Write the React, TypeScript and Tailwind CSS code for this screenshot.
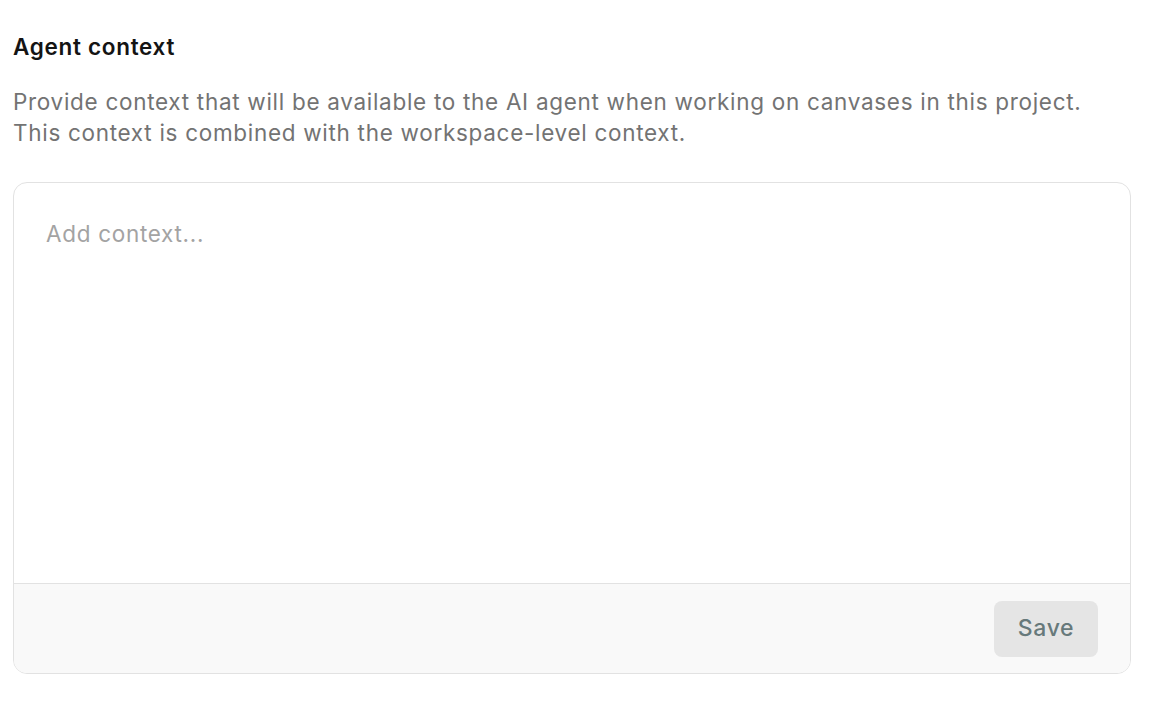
export default function App() {
  return (
    <div className="min-h-screen bg-white px-[13px] pt-[31px] tracking-[0.7px]" style={{ fontFamily: 'Inter, "Noto Sans", sans-serif' }}>
      <h2 className="text-[22.5px] leading-[31px] font-semibold text-[#141414]">Agent context</h2>
      <p className="mt-[24px] text-[22.5px] leading-[31px] text-[#737373]">
        Provide context that will be available to the AI agent when working on canvases in this project.
        <br />
        This context is combined with the workspace-level context.
      </p>
      <div className="mt-[34px] w-[1118px] overflow-hidden rounded-[14px] border-[1.5px] border-[#e2e2e2] bg-white">
        <textarea
          className="block h-[400px] w-full resize-none px-[32px] pt-[35px] text-[22.5px] leading-[31px] tracking-[0.7px] text-[#141414] outline-none placeholder:text-[#a3a3a3]"
          placeholder="Add context..."
        />
        <div className="flex h-[90px] items-center justify-end border-t-[1.5px] border-[#e2e2e2] bg-[#f9f9f9] pr-[32px]">
          <button className="h-[56px] w-[104px] rounded-[8px] bg-[#e5e5e5] text-[23px] font-medium tracking-[0.7px] text-[#67797b]">
            Save
          </button>
        </div>
      </div>
    </div>
  );
}
